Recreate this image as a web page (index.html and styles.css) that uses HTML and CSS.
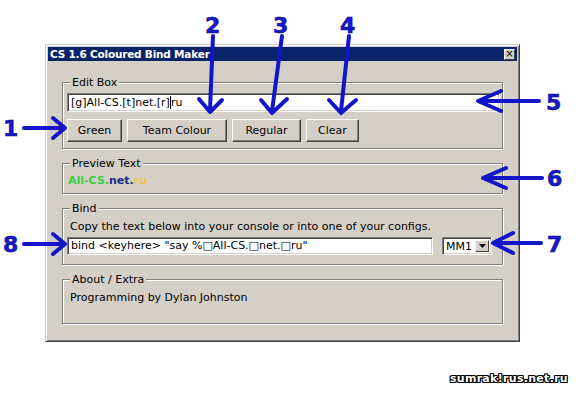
FILE: index.html
```html
<!DOCTYPE html>
<html>
<head>
<meta charset="utf-8">
<link rel="stylesheet" href="styles.css">
</head>
<body>
<div class="window">
  <div class="titlebar">
    <span class="title">CS 1.6 Coloured Bind Maker</span>
    <span class="close">×</span>
  </div>
  <div class="wbody">
    <fieldset class="group g-edit">
      <legend>Edit Box</legend>
      <div class="field edit">[g]All-CS.[t]net.[r]<span class="caret"></span>ru</div>
      <div class="btnrow">
        <div class="btn b-green">Green</div>
        <div class="btn b-team">Team Colour</div>
        <div class="btn b-reg">Regular</div>
        <div class="btn b-clear">Clear</div>
      </div>
    </fieldset>
    <fieldset class="group g-prev">
      <legend>Preview Text</legend>
      <div class="preview"><span class="c-green">All-CS.</span><span class="c-blue">net.</span><span class="c-yellow">ru</span></div>
    </fieldset>
    <fieldset class="group g-bind">
      <legend>Bind</legend>
      <div class="desc">Copy the text below into your console or into one of your configs.</div>
      <div class="bindrow">
        <div class="field bindf">bind &lt;keyhere&gt; "say %□All-CS.□net.□ru"</div>
        <div class="field combo"><span class="cval">MM1</span><span class="cbtn"><svg width="7" height="4" viewBox="0 0 7 4"><path d="M0 0H7L3.5 4Z" fill="#000"/></svg></span></div>
      </div>
    </fieldset>
    <fieldset class="group g-about">
      <legend>About / Extra</legend>
      <div class="about">Programming by Dylan Johnston</div>
    </fieldset>
  </div>
</div>
<div class="watermark">sumrak!rus.net.ru</div>

<svg class="annot" width="576" height="400" viewBox="0 0 576 400">
  <g stroke="#1414c8" stroke-width="4" fill="none" stroke-linecap="round" stroke-linejoin="round">
    <path d="M24 128H63M53 118L65 128L53 138"/>
    <path d="M24 244H63M53 234L65 244L53 254"/>
    <path d="M213 36L210 110M199 99L210 112L222 100"/>
    <path d="M282 36L272 111M261 100L272 113L287 99"/>
    <path d="M349 36L341 111M329 100L341 113L356 100"/>
    <path d="M539 101H480M501 91L478 101L501 111"/>
    <path d="M542 178H485M506 168L483 178L506 188"/>
    <path d="M541 243H496M513 233L493 243L513 253"/>
  </g>
  <g class="nums" fill="#1818d0" stroke="#0a0a80" stroke-width="0.6">
    <text x="3" y="136">1</text>
    <text x="205" y="33">2</text>
    <text x="273" y="33">3</text>
    <text x="340" y="33">4</text>
    <text x="546" y="110">5</text>
    <text x="547" y="186">6</text>
    <text x="547" y="252">7</text>
    <text x="3" y="252">8</text>
  </g>
</svg>
</body>
</html>
```

FILE: styles.css
```css
html, body {
  margin: 0;
  padding: 0;
  background: #fff;
}
body {
  position: relative;
  width: 576px;
  height: 400px;
  overflow: hidden;
  font-family: "DejaVu Sans", Verdana, sans-serif;
  font-size: 11px;
  color: #000;
}
.window {
  margin: 44px 0 0 45px;
  width: 475px;
  height: 298px;
  box-sizing: border-box;
  background: #d4d0c8;
  border: 1px solid;
  border-color: #d4d0c8 #404040 #404040 #d4d0c8;
  box-shadow: inset 1px 1px 0 #fff, inset -1px -1px 0 #808080;
  padding: 2px;
  display: flex;
  flex-direction: column;
}
.titlebar {
  height: 14px;
  background: #0a246a;
  color: #fff;
  display: flex;
  align-items: center;
  justify-content: space-between;
  padding: 0 2px 0 2px;
}
.title {
  font-weight: bold;
  font-size: 10.5px;
  line-height: 14px;
  letter-spacing: -0.2px;
}
.close {
  width: 11px;
  height: 11px;
  box-sizing: border-box;
  background: #d4d0c8;
  color: #000;
  border: 1px solid;
  border-color: #fff #404040 #404040 #fff;
  font-size: 10px;
  line-height: 8px;
  text-align: center;
  font-family: "DejaVu Sans", sans-serif;
}
.wbody {
  padding: 15px 14px 0 14px;
  display: flex;
  flex-direction: column;
  gap: 8px;
}
.group {
  margin: 0;
  min-width: 0;
  border: 1px solid #808080;
  box-shadow: inset 1px 1px 0 #fff, 1px 1px 0 #fff;
  padding: 0 2px 0 4px;
}
.group legend {
  margin-left: 3px;
  padding: 0 2px;
  line-height: 13px;
  height: 13px;
  background: #d4d0c8;
}
.g-edit { padding-top: 4px; padding-bottom: 6px; }
.g-prev { padding-top: 4px; padding-bottom: 6px; }
.g-bind { padding-top: 5px; padding-bottom: 9px; }
.g-about { padding-top: 5px; padding-bottom: 19px; }

.field {
  background: #fff;
  box-sizing: border-box;
  border: 1px solid;
  border-color: #808080 #fff #fff #808080;
  box-shadow: inset 1px 1px 0 #404040, inset -1px -1px 0 #d4d0c8;
  white-space: nowrap;
  overflow: hidden;
}
.edit {
  height: 19px;
  line-height: 17px;
  padding-left: 3px;
}
.caret {
  display: inline-block;
  width: 1px;
  height: 13px;
  background: #000;
  vertical-align: -3px;
}
.btnrow {
  display: flex;
  gap: 5px;
  margin-top: 7px;
}
.btn {
  height: 23px;
  box-sizing: border-box;
  border: 1px solid;
  border-color: #fff #404040 #404040 #fff;
  box-shadow: inset -1px -1px 0 #808080;
  background: #d4d0c8;
  text-align: center;
  line-height: 21px;
}
.b-green { width: 55px; }
.b-team { width: 100px; }
.b-reg { width: 69px; }
.b-clear { width: 53px; }

.preview {
  font-weight: bold;
  line-height: 13px;
  padding-left: 1px;
}
.c-green { color: #3ccf3c; }
.c-blue { color: #1a2a8e; }
.c-yellow { color: #f0c850; }

.desc {
  line-height: 13px;
  padding-left: 3px;
}
.bindrow {
  display: flex;
  margin-top: 4px;
  gap: 9px;
}
.bindf {
  width: 366px;
  height: 18px;
  line-height: 16px;
  padding-left: 3px;
}
.combo {
  width: 50px;
  height: 18px;
  display: flex;
  align-items: stretch;
  padding: 2px;
}
.cval {
  flex: 1;
  line-height: 14px;
  padding-left: 1px;
}
.cbtn {
  width: 14px;
  box-sizing: border-box;
  background: #d4d0c8;
  border: 1px solid;
  border-color: #fff #404040 #404040 #fff;
  display: flex;
  align-items: center;
  justify-content: center;
}
.about {
  line-height: 13px;
  padding-left: 3px;
}
.watermark {
  margin: 30px 8px 0 0;
  text-align: right;
  font-family: "DejaVu Sans", sans-serif;
  font-weight: bold;
  font-size: 11px;
  color: #fff;
  letter-spacing: 0.3px;
  text-shadow: 1px 0 0 #000, -1px 0 0 #000, 0 1px 0 #000, 0 -1px 0 #000, 1px 1px 0 #000, -1px -1px 0 #000, 1px -1px 0 #000, -1px 1px 0 #000;
}
.annot {
  position: absolute;
  left: 0;
  top: 0;
  pointer-events: none;
}
.nums text {
  font-family: "DejaVu Sans", sans-serif;
  font-weight: bold;
  font-size: 22px;
}
```
